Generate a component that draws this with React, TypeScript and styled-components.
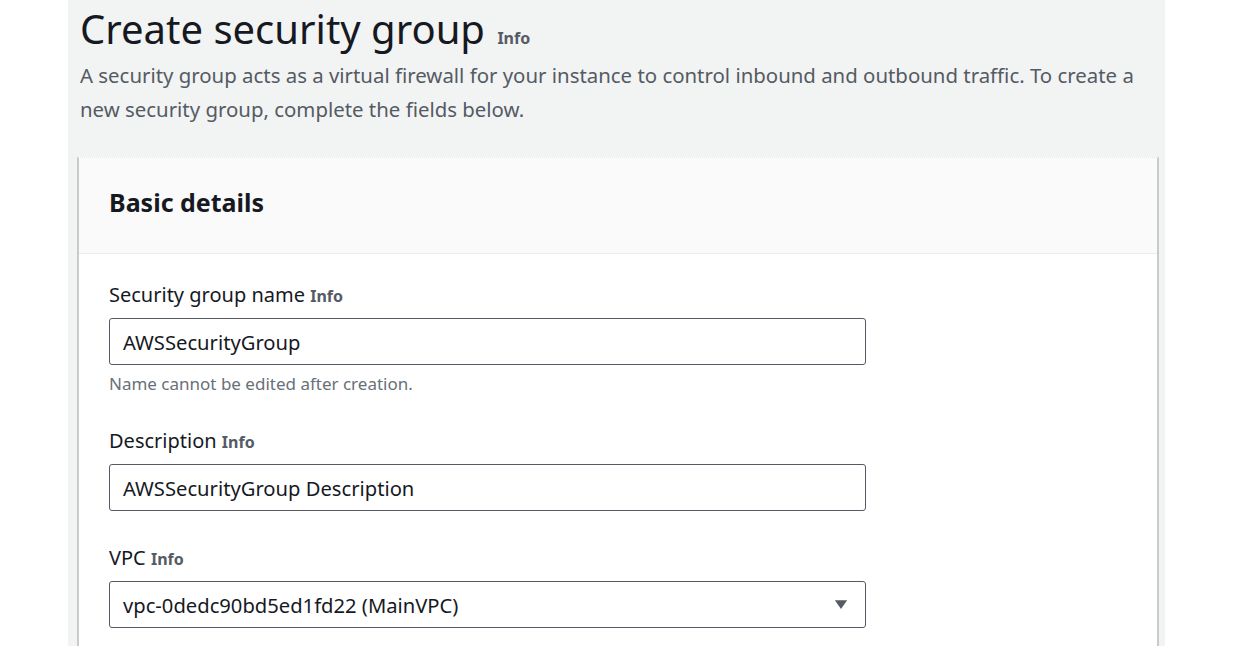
import styled, { createGlobalStyle } from "styled-components";

const GlobalStyle = createGlobalStyle`
  body {
    margin: 0;
    background: #ffffff;
    font-family: "Noto Sans", "Open Sans", sans-serif;
    color: #16191f;
  }
`;

const fields = [
  { label: "Security group name", value: "AWSSecurityGroup", hint: "Name cannot be edited after creation." },
  { label: "Description", value: "AWSSecurityGroup Description" },
];

export default function App() {
  return (
    <>
      <GlobalStyle />
      <Page>
        <Panel>
          <Title>
            Create security group <TitleInfo $size={16}>Info</TitleInfo>
          </Title>
          <Lead>
            A security group acts as a virtual firewall for your instance to control inbound and outbound traffic. To
            create a new security group, complete the fields below.
          </Lead>

          <Card>
            <CardHeader>
              <h2>Basic details</h2>
            </CardHeader>
            <CardBody>
              {fields.map((f) => (
                <Field key={f.label} $gap={f.hint ? 32 : 33}>
                  <Label>
                    {f.label} <InfoLink $size={16}>Info</InfoLink>
                  </Label>
                  <Input>{f.value}</Input>
                  {f.hint && <Hint>{f.hint}</Hint>}
                </Field>
              ))}
              <Field $gap={0}>
                <Label>
                  VPC <InfoLink $size={16}>Info</InfoLink>
                </Label>
                <Select>
                  <span>vpc-0dedc90bd5ed1fd22 (MainVPC)</span>
                  <Caret viewBox="0 0 16 12">
                    <path d="M1 1h14L8 11z" fill="#545b64" />
                  </Caret>
                </Select>
              </Field>
            </CardBody>
          </Card>
        </Panel>
      </Page>
    </>
  );
}

const Page = styled.div`
  height: 646px;
  overflow: hidden;
  padding-left: 68px;
`;

const Panel = styled.div`
  width: 1097px;
  height: 100%;
  box-sizing: border-box;
  background: #f2f3f3;
  padding: 0 6px 0 9px;
  display: flex;
  flex-direction: column;
`;

const Title = styled.h1`
  margin: 0;
  padding: 4px 0 0 3px;
  font-size: 40px;
  font-weight: 400;
  line-height: 50px;
  color: #16191f;
`;

const InfoLink = styled.span<{ $size: number }>`
  font-size: ${({ $size }) => $size}px;
  font-weight: 700;
  color: #545b64;
`;

const TitleInfo = styled(InfoLink)`
  margin-left: 2px;
`;

const Lead = styled.p`
  margin: -5px 0 0 3px;
  font-size: 20.4px;
  line-height: 34px;
  color: #545b64;
`;

const Card = styled.div`
  flex: 1;
  margin-top: 31px;
  background: #ffffff;
  border-left: 2px solid #c8cacc;
  border-right: 2px solid #c8cacc;
  border-top: 1px dotted #e4e6e8;
`;

const CardHeader = styled.div`
  height: 96px;
  box-sizing: border-box;
  background: #fafafa;
  border-bottom: 1px solid #eaeded;
  padding: 0 30px 8px;
  display: flex;
  align-items: center;

  h2 {
    margin: 0;
    font-size: 25px;
    font-weight: 700;
    color: #16191f;
  }
`;

const CardBody = styled.div`
  padding: 27px 30px 0;
  display: flex;
  flex-direction: column;
`;

const Field = styled.div<{ $gap: number }>`
  display: flex;
  flex-direction: column;
  margin-bottom: ${({ $gap }) => $gap}px;
`;

const Label = styled.div`
  font-size: 20px;
  line-height: 28px;
  margin-bottom: 8px;
  color: #16191f;
`;

const Input = styled.div`
  width: 757px;
  height: 47px;
  box-sizing: border-box;
  border: 1px solid #545b64;
  border-radius: 3px;
  background: #ffffff;
  padding: 0 13px;
  display: flex;
  align-items: center;
  font-size: 20.2px;
  color: #16191f;
`;

const Select = styled(Input)`
  justify-content: space-between;
  padding-right: 17px;
`;

const Caret = styled.svg`
  width: 14px;
  height: 11px;
`;

const Hint = styled.div`
  margin-top: 8px;
  font-size: 17px;
  line-height: 22px;
  color: #687078;
`;
